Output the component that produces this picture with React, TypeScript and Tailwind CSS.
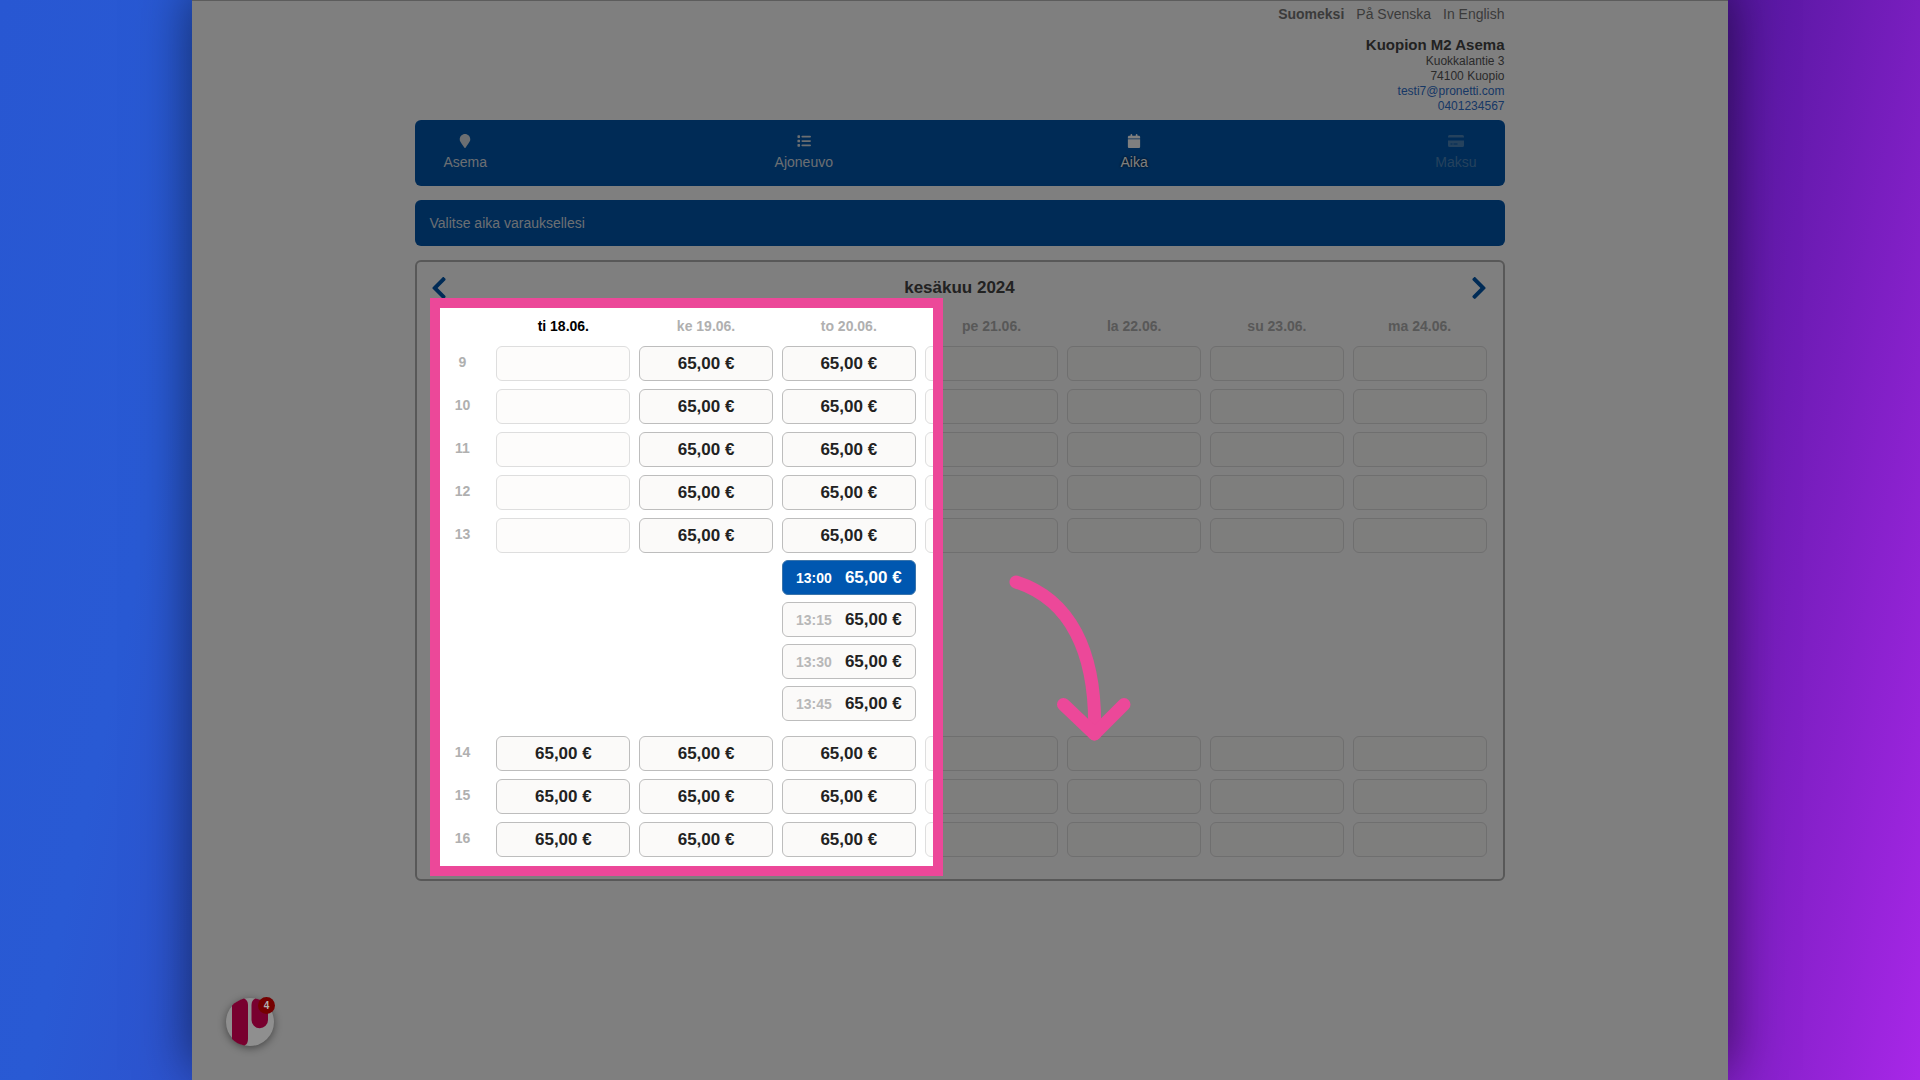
import type { ComponentType } from "react";
import { FaChevronLeft, FaChevronRight, FaMapMarker } from "react-icons/fa";
import { FaCalendar, FaList } from "react-icons/fa6";

const PRICE = "65,00 €";

function CardIcon() {
  return (
    <svg viewBox="0 0 16 14" className="h-3.5 w-4" fill="currentColor" aria-hidden="true">
      <path d="M0 3.500V2.500Q0 1 1.500 1H14.500Q16 1 16 2.500V3.500Z" />
      <path
        fillRule="evenodd"
        d="M0 6.500H16V11.500Q16 13 14.500 13H1.500Q0 13 0 11.500ZM2.500 9.500V10.500H4.500V9.500ZM5.500 9.500V10.500H9.500V9.500Z"
      />
    </svg>
  );
}

const steps: { label: string; icon: ComponentType<{ className?: string }>; tone: string; disabled?: boolean }[] = [
  { label: "Asema", icon: FaMapMarker, tone: "text-[#d8dee4]" },
  { label: "Ajoneuvo", icon: FaList, tone: "text-[#d8dee4]" },
  { label: "Aika", icon: FaCalendar, tone: "text-white [text-shadow:0_0_3px_#000]" },
  { label: "Maksu", icon: CardIcon, tone: "text-[#4a84bb]", disabled: true },
];

const days = ["ti 18.06.", "ke 19.06.", "to 20.06.", "pe 21.06.", "la 22.06.", "su 23.06.", "ma 24.06."];

// open = indexes of the days that have free times in that hour
const morning = [9, 10, 11, 12, 13].map((hour) => ({ hour, open: [1, 2] }));
const afternoon = [14, 15, 16].map((hour) => ({ hour, open: [0, 1, 2] }));

const quarters = ["13:00", "13:15", "13:30", "13:45"];

const rowGrid = "grid grid-cols-[50px_repeat(7,minmax(0,1fr))] gap-x-[9px]";

function HourRow({ hour, open }: { hour: number; open: number[] }) {
  return (
    <div className={rowGrid}>
      <span className="self-center pb-1 text-center text-sm font-bold text-[#b0b0b0]">{hour}</span>
      {days.map((day, i) =>
        open.includes(i) ? (
          <button
            key={day}
            type="button"
            className="h-[35px] rounded-md border border-[#bdbdbd] bg-[#fbfaf9] text-[17px] leading-5 font-bold text-[#222]"
          >
            {PRICE}
          </button>
        ) : (
          <button
            key={day}
            type="button"
            disabled
            aria-label={`${day} ${hour}`}
            className="h-[35px] rounded-md border border-[#dedede] bg-[#fdfcfb]"
          />
        )
      )}
    </div>
  );
}

function Quarters() {
  return (
    <div className={`${rowGrid} mt-[7px] mb-[15px]`}>
      <div className="col-start-4 flex flex-col gap-[7px]">
        {quarters.map((time, i) => (
          <button
            key={time}
            type="button"
            className={`flex h-[35px] items-center justify-between rounded-md border px-[13px] font-bold ${
              i === 0 ? "border-[#3a74ab] bg-[#0057b0] text-white" : "border-[#bdbdbd] bg-[#fbfaf9] text-[#222]"
            }`}
          >
            <span className={`text-sm ${i === 0 ? "text-white" : "text-[#b8b8b8]"}`}>{time}</span>
            <span className="text-[17px] leading-5">{PRICE}</span>
          </button>
        ))}
      </div>
    </div>
  );
}

function CurvedArrow() {
  return (
    <svg
      aria-hidden="true"
      viewBox="0 0 122 168"
      className="absolute top-[313px] left-[592px] z-20 h-[168px] w-[122px]"
      fill="none"
      stroke="#ec4899"
      strokeWidth="13"
      strokeLinecap="round"
      strokeLinejoin="round"
    >
      <path d="M7 7C60 24 88 75 85.500 159" />
      <path d="M54.5 129.5L85.500 159L115 129.500" />
    </svg>
  );
}

function ChatWidget() {
  return (
    <button
      type="button"
      aria-label="Chat"
      className="absolute bottom-[34px] left-[34px] z-30 size-12 rounded-full bg-[#8f8f8f] shadow-[0_2px_8px_rgba(0,0,0,0.45)]"
    >
      <svg viewBox="0 0 48 48" className="size-12" aria-hidden="true">
        <path d="M6 7.500C9 4.500 13 2 18 0.500Q22 2 22 7V41Q22 46 18.500 47.500Q11 46 6 41Z" fill="#78002f" />
        <path d="M25.500 7Q25.500 2 29.500 0.500Q37 2 42 7V22A8.250 8.250 0 0 1 25.500 22Z" fill="#78002f" />
      </svg>
      <span className="absolute -top-px -right-px flex size-[17px] items-center justify-center rounded-full bg-[#750000] text-[10px] font-bold text-[#b0b0b0]">
        4
      </span>
    </button>
  );
}

export default function App() {
  return (
    <div className="min-h-screen bg-[linear-gradient(102deg,#2857d2_0%,#295ad4_12%,#50169b_80%,#a827e8_100%)] font-['Liberation_Sans',Arial,sans-serif]">
      <div className="relative mx-auto min-h-screen w-4/5 bg-white shadow-[0_-10px_50px_rgba(0,0,0,0.55)]">
        <div className="relative min-h-screen overflow-hidden border-t border-[#5c5c5c]">
          <main className="mx-auto w-[70.9%]">
            <header className="flex flex-col items-end pt-[3px] text-[#555]">
              <nav className="flex gap-3 text-sm text-[#777]">
                <a href="#fi" className="font-bold">Suomeksi</a>
                <a href="#sv">På Svenska</a>
                <a href="#en">In English</a>
              </nav>
              <h1 className="mt-3 text-[15px] leading-[18px] font-bold text-[#444]">Kuopion M2 Asema</h1>
              <address className="flex flex-col items-end text-xs leading-[15px] not-italic">
                <span>Kuokkalantie 3</span>
                <span>74100 Kuopio</span>
                <a href="mailto:testi7@pronetti.com" className="text-[#2f70cc]">testi7@pronetti.com</a>
                <a href="tel:0401234567" className="text-[#2f70cc]">0401234567</a>
              </address>
            </header>

            <nav className="mt-1.5 flex h-[66px] items-center justify-between rounded-md bg-[#0057ad] px-7">
              {steps.map(({ label, icon: Icon, tone, disabled }) => (
                <button key={label} type="button" disabled={disabled} className={`flex flex-col items-center gap-1 text-sm ${tone}`}>
                  <Icon className="size-3.5" />
                  {label}
                </button>
              ))}
            </nav>

            <p className="mt-3.5 flex h-[46px] items-center rounded-md bg-[#0057ad] px-3.5 text-sm text-[#d8dee4]">
              Valitse aika varauksellesi
            </p>

            <section className="relative mt-3.5 rounded-md border-2 border-[#b0b0b0] pt-3 pr-4 pb-[22px] pl-5">
              <div className="-mr-px -ml-1.5 flex h-7 items-center justify-between text-[#0057ad]">
                <button type="button" aria-label="Edellinen">
                  <FaChevronLeft className="h-[26px] w-4" />
                </button>
                <h2 className="text-[17px] leading-6 font-bold text-[#444]">kesäkuu 2024</h2>
                <button type="button" aria-label="Seuraava">
                  <FaChevronRight className="h-[26px] w-4" />
                </button>
              </div>

              <div className={`${rowGrid} mt-3.5 mb-2.5 text-center text-sm font-bold`}>
                <span />
                {days.map((day, i) => (
                  <span key={day} className={i === 0 ? "text-black" : "text-[#b0b0b0]"}>
                    {day}
                  </span>
                ))}
              </div>

              <div className="flex flex-col gap-2">
                {morning.map((row) => (
                  <HourRow key={row.hour} {...row} />
                ))}
              </div>
              <Quarters />
              <div className="flex flex-col gap-2">
                {afternoon.map((row) => (
                  <HourRow key={row.hour} {...row} />
                ))}
              </div>

              {/* Spotlight: the huge shadow dims everything outside the frame */}
              <div className="pointer-events-none absolute top-9 bottom-[3px] left-[13px] z-10 w-[513px] border-10 border-[#ec4899] shadow-[0_0_0_2000px_rgba(0,0,0,0.5)]" />
              <CurvedArrow />
            </section>
          </main>
          <ChatWidget />
        </div>
      </div>
    </div>
  );
}
